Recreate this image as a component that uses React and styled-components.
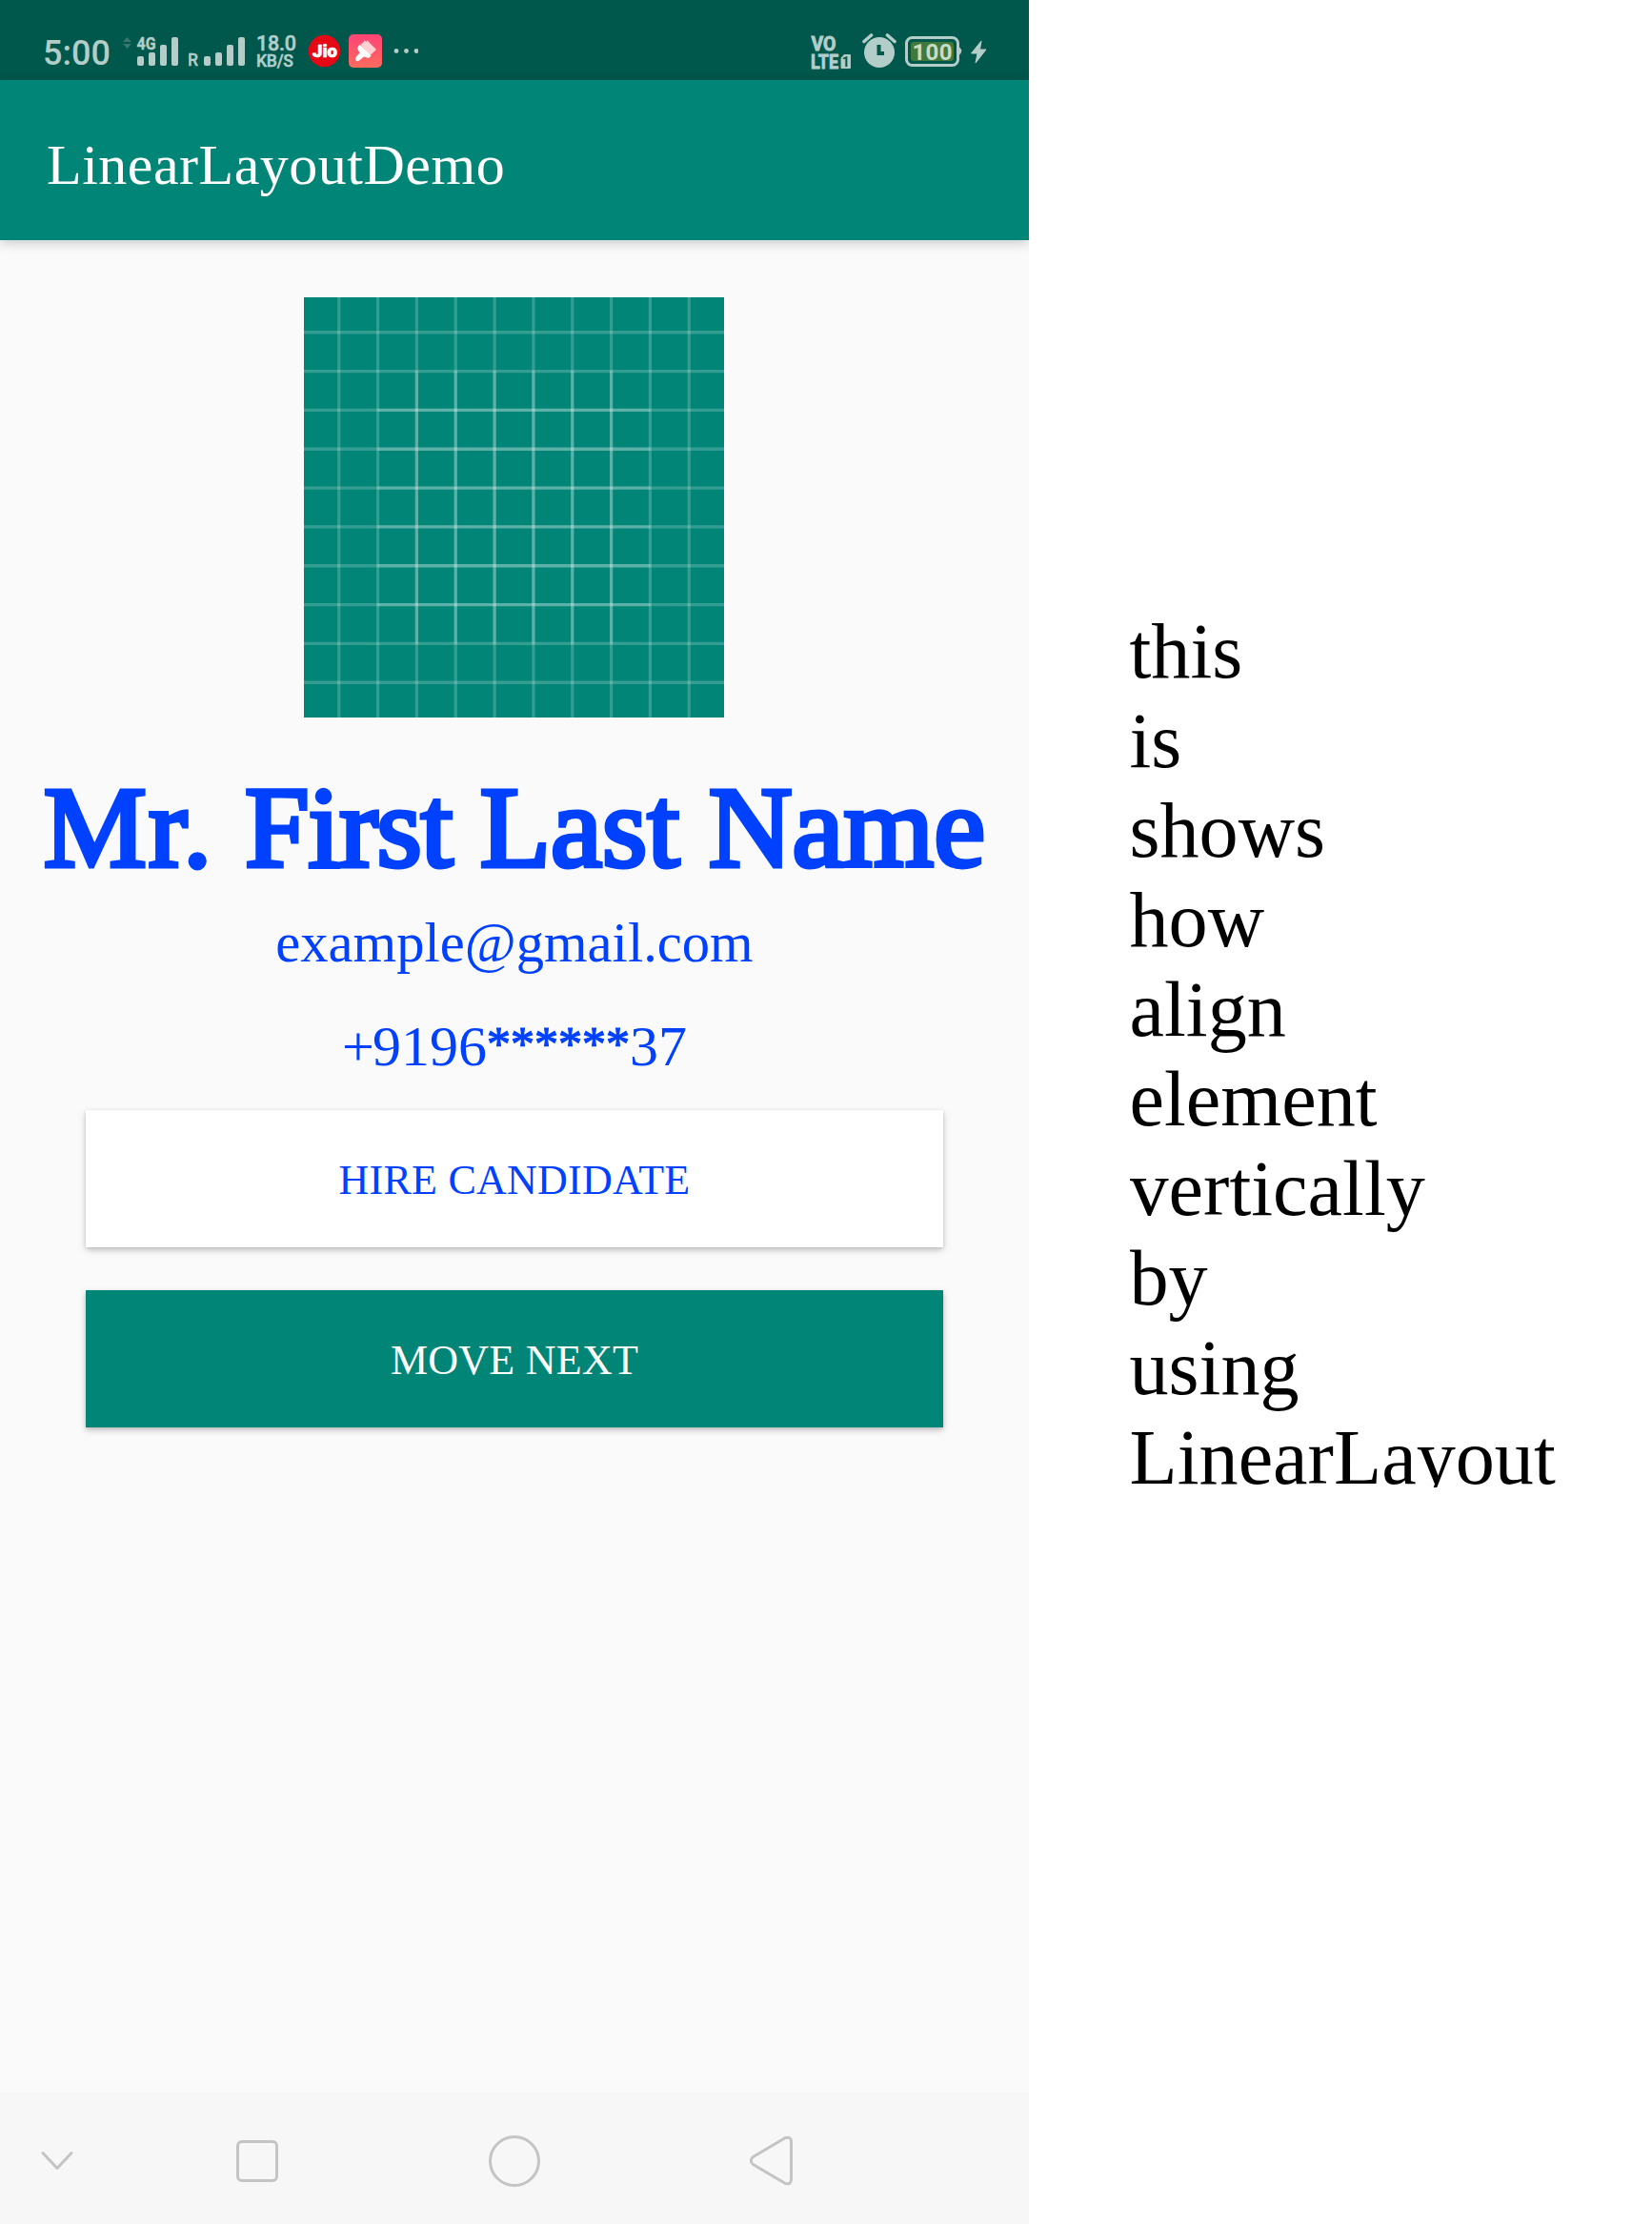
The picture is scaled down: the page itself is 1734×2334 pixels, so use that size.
import React from 'react';
import styled, { createGlobalStyle } from 'styled-components';

const teal = '#008577';
const tealDark = '#00574b';
const blue = '#0041ff';
const ink = '#b3cdc9';
const serif = '"Liberation Serif", "Times New Roman", serif';

const GlobalStyle = createGlobalStyle`
  body { margin: 0; background: #ffffff; }
  * { box-sizing: border-box; }
`;

const Page = styled.div`
  display: flex;
  width: 1734px;
  height: 2334px;
  overflow: hidden;
  background: #ffffff;
  font-family: ${serif};
`;

const Phone = styled.main`
  display: flex;
  flex-direction: column;
  width: 1080px;
  height: 2334px;
  overflow: hidden;
  background: #fafafa;
`;

const StatusBar = styled.header`
  display: flex;
  justify-content: space-between;
  height: 84px;
  flex: none;
  padding: 30px 44px 6px 45px;
  background: ${tealDark};
  color: ${ink};
  font-family: Roboto, sans-serif;
`;

const StatusGroup = styled.div`
  display: flex;
  align-items: flex-start;
  height: 48px;
`;

const Clock = styled.time`
  width: 84px;
  padding-top: 5px;
  font-size: 36px;
  line-height: 42px;
  font-weight: 500;
  white-space: nowrap;
`;

const StatusIcon = styled.svg`
  display: block;
  flex: none;
  margin-right: ${(p) => p.$gap || 0}px;
  font-family: Roboto, sans-serif;
`;

const Speed = styled.div`
  display: flex;
  flex-direction: column;
  width: 55px;
  padding-top: 5px;
`;

const SpeedLine = styled.span`
  font-size: ${(p) => p.$size}px;
  font-weight: 500;
  line-height: ${(p) => p.$line}px;
  letter-spacing: -0.2px;
  white-space: nowrap;
  -webkit-text-stroke: 0.5px ${ink};
`;

const AppBar = styled.div`
  display: flex;
  align-items: center;
  flex: none;
  height: 168px;
  padding: 9px 49px 0;
  background: ${teal};
  box-shadow: 0 3px 12px rgba(0, 0, 0, 0.2);
`;

const AppTitle = styled.h1`
  margin: 0;
  color: #ffffff;
  font-size: 60px;
  line-height: 68px;
  font-weight: 400;
  letter-spacing: 0.5px;
`;

const Content = styled.section`
  display: flex;
  flex: 1;
  flex-direction: column;
  align-items: center;
  padding-top: 60px;
`;

const Picture = styled.svg`
  display: block;
  width: 441px;
  height: 441px;
  margin-right: 1px;
  background: ${teal};
`;

const Name = styled.h2`
  margin: 46px 0 0;
  color: ${blue};
  font-size: 121.5px;
  line-height: 138px;
  font-weight: 400;
  white-space: nowrap;
  -webkit-text-stroke: 4.8px ${blue};
`;

const NamePart = styled.span`
  letter-spacing: ${(p) => p.$spacing}px;
`;

const Detail = styled.p`
  margin: ${(p) => p.$top}px 0 0;
  color: ${blue};
  font-size: ${(p) => p.$size}px;
  line-height: 70px;
  white-space: nowrap;
`;

const Plus = styled.span`
  letter-spacing: -2px;
`;

const Mask = styled.span`
  font-size: 50px;
  line-height: 0;
  vertical-align: 6px;
  -webkit-text-stroke: 1.2px ${blue};
`;

const Action = styled.button`
  width: 900px;
  height: 144px;
  flex: none;
  margin: ${(p) => p.$top}px 0 0;
  padding: 3px 0 0;
  border: 0;
  background: ${(p) => (p.$filled ? teal : '#ffffff')};
  color: ${(p) => (p.$filled ? '#ffffff' : blue)};
  font-family: ${serif};
  font-size: 44px;
  line-height: 50px;
  letter-spacing: 0.25px;
  box-shadow: 0 3px 7px rgba(0, 0, 0, 0.22), 0 1px 3px rgba(0, 0, 0, 0.1);
`;

const NavBar = styled.nav`
  flex: none;
  display: flex;
  align-items: center;
  height: 138px;
  padding: 6px 0 0 40px;
  background: #f7f7f7;
`;

const NavIcon = styled.svg`
  display: block;
  flex: none;
  margin-right: ${(p) => p.$gap || 0}px;
  fill: none;
  stroke: #c4c4c4;
  stroke-width: 3;
  stroke-linecap: round;
  stroke-linejoin: round;
`;

const Side = styled.aside`
  flex: 1;
  padding: 637px 0 0 105.5px;
`;

const Words = styled.p`
  display: flex;
  flex-direction: column;
  height: 923.5px;
  margin: 0;
  overflow: hidden;
  color: #000000;
  font-size: 82.2px;
  line-height: 94px;
`;

const Word = styled.span`
  flex: none;
  height: 94px;
`;

const steps = [9, 19, 29, 39, 49, 59, 69, 79, 89, 99];
const inner = [29, 39, 49, 59, 69, 79];
const words = ['this', 'is', 'shows', 'how', 'align', 'element', 'vertically', 'by', 'using', 'LinearLayout'];

function LauncherGrid() {
  return (
    <Picture viewBox="0 0 108 108" stroke="#ffffff" strokeOpacity="0.2" strokeWidth="0.8">
      {steps.map((n) => <path key={`v${n}`} d={`M${n},0V108`} />)}
      {steps.map((n) => <path key={`h${n}`} d={`M0,${n}H108`} />)}
      {inner.map((n) => <path key={`iv${n}`} d={`M${n},19V89`} />)}
      {inner.map((n) => <path key={`ih${n}`} d={`M19,${n}H89`} />)}
    </Picture>
  );
}

function Bars({ x }) {
  return (
    <g fill={ink}>
      <rect x={x} y="29" width="7" height="10" rx="2" />
      <rect x={x + 12} y="25" width="7" height="14" rx="2" />
      <rect x={x + 24} y="17" width="7" height="22" rx="2" />
      <rect x={x + 36} y="9" width="7" height="30" rx="2" />
    </g>
  );
}

export default function App() {
  return (
    <>
      <GlobalStyle />
      <Page>
        <Phone>
          <StatusBar>
            <StatusGroup>
              <Clock>5:00</Clock>
              <StatusIcon width="58" height="48" $gap={11}>
                <path d="M0,14L4.5,9L9,14ZM0,16H9L4.5,21Z" fill="#38776e" />
                <Bars x={15} />
                <text x="14.5" y="21.5" fontSize="18.5" fontWeight="700" textLength="20" lengthAdjust="spacingAndGlyphs" fill={ink} stroke={ink} strokeWidth="0.4">4G</text>
              </StatusIcon>
              <StatusIcon width="60" height="48" $gap={11}>
                <text x="-1" y="39" fontSize="17.5" fontWeight="500" fill={ink} stroke={ink} strokeWidth="0.4">R</text>
                <Bars x={16} />
              </StatusIcon>
              <Speed>
                <SpeedLine $size={21.5} $line={21}>18.0</SpeedLine>
                <SpeedLine $size={17.5} $line={16}>KB/S</SpeedLine>
              </Speed>
              <StatusIcon width="34" height="48" $gap={8}>
                <circle cx="16.5" cy="23.5" r="16.7" fill="#e50815" />
                <text x="4" y="30" fontSize="18.5" fontWeight="900" stroke="#ffffff" strokeWidth="0.6" textLength="26" lengthAdjust="spacingAndGlyphs" fill="#ffffff">Jio</text>
              </StatusIcon>
              <StatusIcon width="35" height="48" $gap={12}>
                <defs>
                  <linearGradient id="tile" x1="0" y1="0" x2="0" y2="1">
                    <stop offset="0" stopColor="#ff4376" />
                    <stop offset="1" stopColor="#ff6b5e" />
                  </linearGradient>
                </defs>
                <rect y="6" width="35" height="35" rx="5" fill="url(#tile)" />
                <path d="M12.5,17L17,12.5L18.5,14L19.5,12L21.5,14.5L29,22L22,28.5Z" fill="#ffd0d3" />
                <path d="M11.5,16.5L23.5,28.5L21,31L16,29.5L11,33.5Q8.5,35 7.3,33Q6.5,31.5 8,29.5L11.5,25.5L9,20.5Z" fill="#ffffff" />
              </StatusIcon>
              <StatusIcon width="26" height="48" fill={ink}>
                <circle cx="3" cy="23.5" r="2.4" />
                <circle cx="13.5" cy="23.5" r="2.4" />
                <circle cx="24" cy="23.5" r="2.4" />
              </StatusIcon>
            </StatusGroup>
            <StatusGroup>
              <StatusIcon width="43" height="48" $gap={11} fill={ink} stroke={ink} strokeWidth="0.9" fontWeight="700">
                <text x="0.5" y="23" fontSize="20" textLength="26" lengthAdjust="spacingAndGlyphs">VO</text>
                <text x="0" y="41.5" fontSize="21" textLength="29" lengthAdjust="spacingAndGlyphs">LTE</text>
                <path d="M35,27.5H41.5V41.5H32V31Z" />
                <text x="32.8" y="39.5" fontSize="14" fill={tealDark} stroke="none">1</text>
              </StatusIcon>
              <StatusIcon width="36" height="48" $gap={9}>
                <circle cx="18" cy="25" r="16" fill={ink} />
                <path d="M2,13.5L9.5,7M34,13.5L26.5,7" stroke={ink} strokeWidth="3.6" strokeLinecap="round" />
                <path d="M17.5,17V26H23" fill="none" stroke={tealDark} strokeWidth="4" />
              </StatusIcon>
              <StatusIcon width="60" height="48" $gap={8}>
                <rect x="1.5" y="9.5" width="54" height="29" rx="6" fill="none" stroke={ink} strokeWidth="3" />
                <path d="M57,19.5Q61.5,23.5 57,27.5Z" fill={ink} />
                <rect x="6" y="14" width="45" height="20" rx="3" fill="#41793a" />
                <text x="7.5" y="32.5" fontSize="24" fontWeight="700" textLength="42" fill="#c8dbc8">100</text>
              </StatusIcon>
              <StatusIcon width="18" height="48">
                <path d="M12,13L1.5,26H8L6,36L17,22H10.5Z" fill={ink} stroke={ink} strokeWidth="1" strokeLinejoin="round" />
              </StatusIcon>
            </StatusGroup>
          </StatusBar>
          <AppBar>
            <AppTitle>LinearLayoutDemo</AppTitle>
          </AppBar>
          <Content>
            <LauncherGrid />
            <Name>
              <NamePart $spacing={2.2}>Mr. </NamePart>
              <NamePart $spacing={-1.1}>First </NamePart>
              <NamePart $spacing={0.1}>Last Name</NamePart>
            </Name>
            <Detail $top={18} $size={58.6}>example@gmail.com</Detail>
            <Detail $top={38} $size={60}>
              <Plus>+</Plus>9196<Mask>******</Mask>37
            </Detail>
            <Action $top={32}>HIRE CANDIDATE</Action>
            <Action $top={45} $filled>MOVE NEXT</Action>
          </Content>
          <NavBar>
            <NavIcon width="40" height="54" $gap={168}>
              <path d="M5,18.5L20,34.5L35,18.5" />
            </NavIcon>
            <NavIcon width="44" height="54" $gap={221}>
              <rect x="1.5" y="6.5" width="41" height="41" rx="4.5" />
            </NavIcon>
            <NavIcon width="54" height="54" $gap={220}>
              <circle cx="27" cy="27" r="25.5" />
            </NavIcon>
            <NavIcon width="46" height="54">
              <path d="M3.5,22.5L37,2.7Q43.5,0.5 43.5,7V45.5Q43.5,52.5 37,50.3L3.5,30.5Q-1,26.5 3.5,22.5Z" />
            </NavIcon>
          </NavBar>
        </Phone>
        <Side>
          <Words>
            {words.map((word) => <Word key={word}>{word}</Word>)}
          </Words>
        </Side>
      </Page>
    </>
  );
}
